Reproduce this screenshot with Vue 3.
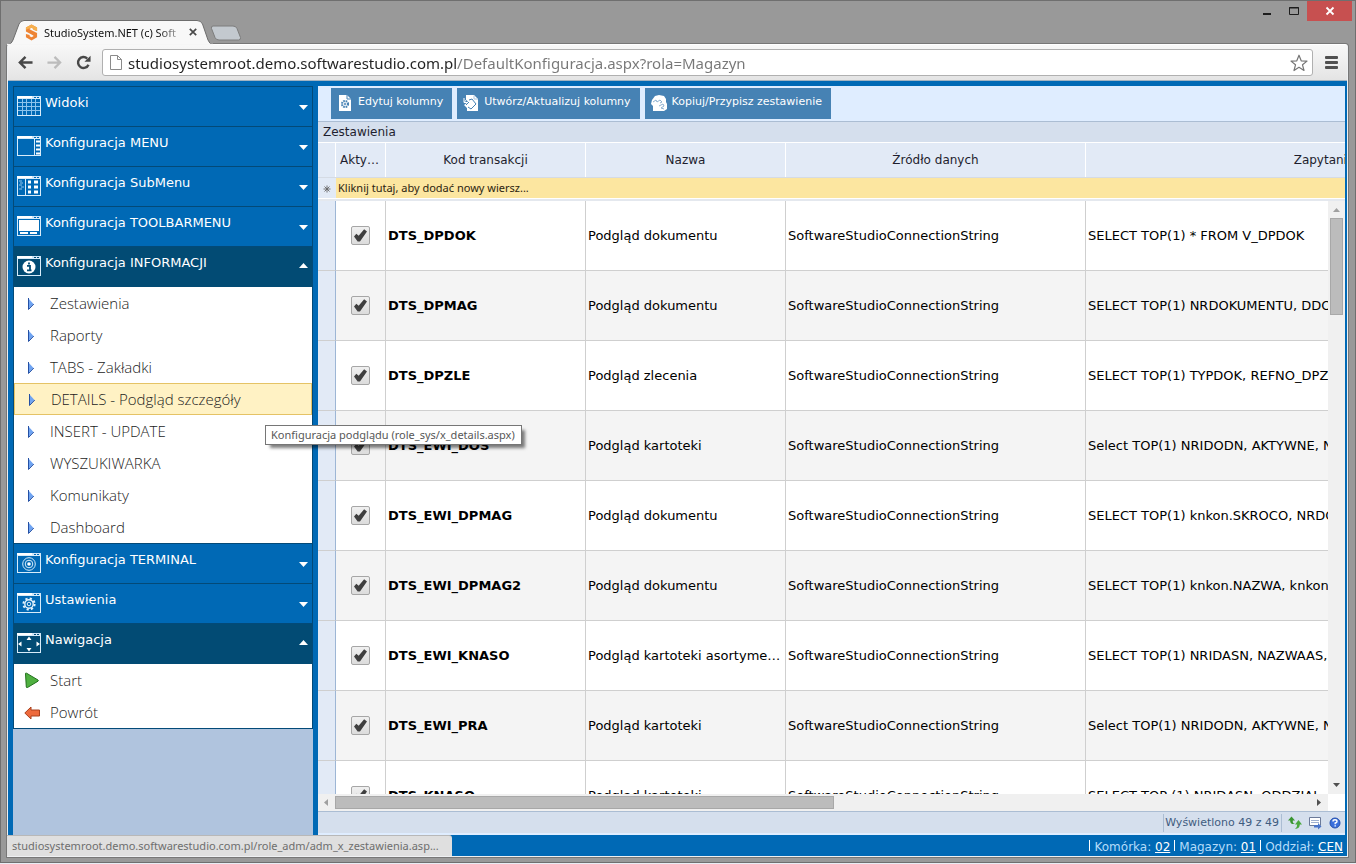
<template>
  <div class="window">
    <header class="titlebar">
      <div class="tab">
        <svg class="tab-shape" viewBox="0 0 206 25" aria-hidden="true">
          <path d="M0 25 Q5 24 6 20 L12 4 Q13.500 0.500 17 0.500 H190 Q194 0.500 195.500 4 L201 20 Q202.500 24 206 25 Z" fill="#f8f8f8" stroke="#6d6d6d" />
          <path d="M0 24.500 H206" stroke="#f6f6f6" stroke-width="1.500" />
        </svg>
        <svg class="favicon" viewBox="0 0 14 18" aria-hidden="true">
          <path d="M13 5.500 V3.500 L7 0.500 L1 3.500 V8 L6.500 11 L9 12.200 V13 L7 14 L5 13 V11.600 L1 10.500 V14.200 L7 17.500 L13 14.200 V9.500 L7.500 6.800 L5 5.600 V5 L7 4 L9 5 V6 L13 7.500 Z" fill="#ee8434" />
          <path d="M13 5.500 V3.500 L7 0.500 L1 3.500 V6 L7 4 L9 5 V6 L13 7.500 Z" fill="#f6b04e" />
        </svg>
        <span class="tab-title">StudioSystem.NET (c) Soft</span>
        <button class="tab-close" aria-label="Zamknij kartę">
          <svg viewBox="0 0 8 8"><path d="M0.800 0.800 L7.200 7.200 M7.200 0.800 L0.800 7.200" stroke="#4a4a4a" stroke-width="1.700" /></svg>
        </button>
      </div>
      <button class="new-tab" aria-label="Nowa karta">
        <svg viewBox="0 0 32 16"><path d="M3 1 H23 Q26 1 27 3.500 L30.500 12.500 Q31 15 28.500 15 H9 Q6 15 5 12.500 L1.500 3.500 Q1 1 3 1 Z" fill="#c3c9cf" stroke="#7c7c7c" /></svg>
      </button>
      <div class="controls">
        <button aria-label="Minimalizuj"><svg viewBox="0 0 10 10"><rect x="1" y="7" width="8" height="2" fill="#1d1d1d" /></svg></button>
        <button aria-label="Maksymalizuj"><svg viewBox="0 0 10 10"><path d="M0.500 1.500 H9.500 V8.500 H0.500 Z M0 2 H10" fill="none" stroke="#1d1d1d" /></svg></button>
        <button class="close" aria-label="Zamknij"><svg viewBox="0 0 10 10"><path d="M1.500 1.500 L8.500 8.500 M8.500 1.500 L1.500 8.500" stroke="#fff" stroke-width="1.800" /></svg></button>
      </div>
    </header>

    <div class="browser">
      <div class="navbar">
        <button class="nav-btn" aria-label="Wstecz">
          <svg viewBox="0 0 16 16"><path d="M15.500 8 H2.500 M8 2 L2 8 L8 14" fill="none" stroke="#484848" stroke-width="2.600" /></svg>
        </button>
        <button class="nav-btn" aria-label="Dalej">
          <svg viewBox="0 0 16 16"><path d="M0.500 8 H13.500 M8 2 L14 8 L8 14" fill="none" stroke="#bcbcbc" stroke-width="2.400" /></svg>
        </button>
        <button class="nav-btn" aria-label="Odśwież">
          <svg viewBox="0 0 16 16"><path d="M13.300 10.300 A5.800 5.800 0 1 1 12 3.800" fill="none" stroke="#484848" stroke-width="2.600" /><path d="M15.500 0.800 V7.200 H9 Z" fill="#484848" /></svg>
        </button>
        <div class="omnibox">
          <svg class="page-icon" viewBox="0 0 12 15" aria-hidden="true"><path d="M0.500 0.500 H7.500 L11.500 4.500 V14.500 H0.500 Z M7.500 0.500 V4.500 H11.500" fill="#fff" stroke="#8b8b8b" /></svg>
          <input v-model="url" class="url" type="text" aria-label="Adres" />
          <svg class="star" viewBox="0 0 18 18" aria-hidden="true"><path d="M9 1.200 L11.200 6.800 L17 7.100 L12.500 10.800 L14 16.500 L9 13.300 L4 16.500 L5.500 10.800 L1 7.100 L6.800 6.800 Z" fill="#fff" stroke="#757575" stroke-width="1.200" stroke-linejoin="round" /></svg>
        </div>
        <button class="menu-btn" aria-label="Menu"><i></i><i></i><i></i></button>
      </div>

      <div class="app">
        <div class="app-main">
          <aside class="sidebar">
            <nav class="panel">
              <section v-for="group in groups" :key="group.label">
                <button class="group" :class="{ open: group.items }">
                  <svg class="group-icon" viewBox="0 0 24 20" aria-hidden="true">
                    <rect x="0" y="0" width="15" height="2" fill="#fff" />
                    <path d="M15 0.500 H24 M15 1.500 H17 M19 1.500 H20 M22 1.500 H24" stroke="#cfe6f8" />
                    <rect x="0.500" y="2.500" width="23" height="17" fill="none" stroke="#d8ecfa" />
                    <template v-if="group.icon === 'grid'">
                      <path d="M1 6.500 H23 M1 10.500 H23 M1 14.500 H23 M5.500 3 V19 M9.500 3 V19 M14.500 3 V19 M18.500 3 V19" stroke="#8cc4ec" />
                    </template>
                    <template v-else-if="group.icon === 'menu'">
                      <path d="M17.500 3 V19" stroke="#d8ecfa" />
                      <path d="M19 5.500 H23 M19 9.500 H23 M19 13.500 H23 M19 17.500 H23" stroke="#fff" stroke-width="2" />
                    </template>
                    <template v-else-if="group.icon === 'submenu'">
                      <path d="M8.500 3 V19" stroke="#d8ecfa" />
                      <path d="M2 5 H5 M3 7 H6 M2 9 H5 M4 11 H7 M2 13 H5" stroke="#8fc4ea" />
                      <path d="M11 6 H14 M17 6 H21 M11 11 H14 M17 11 H21 M11 16 H14 M17 16 H21" stroke="#fff" stroke-width="3" />
                    </template>
                    <template v-else-if="group.icon === 'toolbar'">
                      <rect x="2" y="4" width="20" height="11" fill="#fff" />
                      <path d="M3 17 H11 M13 17 H20" stroke="#fff" stroke-width="2" />
                    </template>
                    <template v-else-if="group.icon === 'info'">
                      <circle cx="12" cy="11" r="6.500" fill="#fff" />
                      <path d="M12 6.500 V8.500 M10 9.800 H13 V14.200 M10 14.300 H14.500" fill="none" stroke="#024b74" stroke-width="1.800" />
                    </template>
                    <template v-else-if="group.icon === 'target'">
                      <g fill="none" stroke="#d8ecfa"><circle cx="12" cy="11" r="6.300" /><circle cx="12" cy="11" r="3.800" /></g>
                      <circle cx="12" cy="11" r="1.800" fill="#fff" />
                    </template>
                    <template v-else-if="group.icon === 'gear'">
                      <circle cx="12" cy="11" r="5.600" fill="none" stroke="#e4f2fc" stroke-width="2" stroke-dasharray="2.200 2.200" />
                      <circle cx="12" cy="11" r="4.200" fill="none" stroke="#e4f2fc" stroke-width="1.400" />
                      <circle cx="12" cy="11" r="1.800" fill="none" stroke="#e4f2fc" />
                    </template>
                    <template v-else>
                      <path d="M12 3.500 L14.500 7 H9.500 Z M12 18.500 L14.500 15 H9.500 Z M1 11 L4.500 8.500 V13.500 Z M23 11 L19.500 8.500 V13.500 Z" fill="#fff" />
                    </template>
                  </svg>
                  <span class="group-label">{{ group.label }}</span>
                  <svg class="group-arrow" viewBox="0 0 9 5" aria-hidden="true">
                    <path :d="group.items ? 'M0 5 L4.500 0 L9 5 Z' : 'M0 0 H9 L4.500 5 Z'" fill="#fff" />
                  </svg>
                </button>
                <ul v-if="group.items" class="items">
                  <li v-for="item in group.items" :key="item.label" class="item" :class="{ hover: item.tip }">
                    <a href="#">
                      <svg class="item-icon" viewBox="0 0 16 16" aria-hidden="true">
                        <path v-if="item.icon === 'start'" d="M1.500 1.500 Q1.500 0.800 2.500 1.200 L14 8 Q14.800 8.500 14 9.200 L3.500 15.500 Q2.500 16 2.300 15 Z" fill="#4fb040" stroke="#22701c" stroke-linejoin="round" />
                        <path v-else-if="item.icon === 'back'" d="M0.800 9 L7 3 V6 H15.500 V12 H7 V15 Z" fill="#ee6a3c" stroke="#a9401d" stroke-linejoin="round" />
                        <g v-else>
                          <path d="M4.500 3.500 L9.500 9 L4.500 14 Z" fill="#6fa4f2" />
                          <path d="M4.500 3 V14.500 L9.800 9" fill="none" stroke="#2450a4" />
                        </g>
                      </svg>
                      {{ item.label }}
                    </a>
                    <span v-if="item.tip" class="tooltip" role="tooltip">{{ item.tip }}</span>
                  </li>
                </ul>
              </section>
            </nav>
          </aside>

          <main class="content">
            <div class="toolbar">
              <button v-for="action in actions" :key="action.label" class="tool">
                <svg viewBox="0 0 16 16" aria-hidden="true">
                  <template v-if="action.icon === 'edit'">
                    <path d="M2 0 H10 L14 4 V16 H2 Z" fill="#fff" />
                    <path d="M10 0 V4 H14" fill="none" stroke="#4682b4" />
                    <circle cx="8" cy="9" r="3" fill="none" stroke="#4682b4" stroke-width="2.200" stroke-dasharray="1.600 0.800" />
                    <circle cx="8" cy="9" r="1" fill="#4682b4" />
                  </template>
                  <template v-else-if="action.icon === 'update'">
                    <path d="M3 0 H11 L15 4 V16 H4 V13 L1 10 L5 7 L3 4 Z" fill="#fff" />
                    <path d="M11 0.500 V4 H15" fill="none" stroke="#a9c6df" />
                    <path d="M6 5 L9 4 L13 9 L8 14 L5 12 M3 10 L6 7" fill="none" stroke="#4682b4" />
                    <path d="M1 3 V7.500 H5 M1.500 7 L4 4" fill="none" stroke="#fff" />
                  </template>
                  <template v-else>
                    <path d="M1 5 L4 1 L8 0 L13 1 L15 4 V7 L16 9 V14 L13 16 H2 V11 L0 9 Z" fill="#fff" />
                    <path d="M2 7 L5 5 L6 7 L9 5 L11 7 L9 8 M8 11 L12 9 L13 11 L10 13 L13 14" fill="none" stroke="#8fb2d1" />
                  </template>
                </svg>
                {{ action.label }}
              </button>
            </div>
            <h1 class="caption">Zestawienia</h1>
            <div class="grid-head">
              <table class="grid">
                <colgroup><col v-for="(w, i) in widths" :key="i" :class="w" /></colgroup>
                <thead>
                  <tr>
                    <th></th>
                    <th v-for="column in columns" :key="column">{{ column }}</th>
                  </tr>
                </thead>
              </table>
              <div class="new-row">
                <span class="new-mark">
                  <svg viewBox="0 0 8 8" aria-hidden="true"><path d="M4 0.500 V7.500 M0.500 4 H7.500 M1.500 1.500 L6.500 6.500 M6.500 1.500 L1.500 6.500" stroke="#666" stroke-width="0.900" /></svg>
                </span>
                <button class="new-text">Kliknij tutaj, aby dodać nowy wiersz...</button>
              </div>
            </div>
            <div class="grid-area">
              <div class="grid-body">
                <table class="grid">
                  <colgroup><col v-for="(w, i) in widths" :key="i" :class="w" /></colgroup>
                  <tbody>
                    <tr v-for="row in rows" :key="row.code">
                      <td class="mark"></td>
                      <td class="check"><input v-model="row.active" type="checkbox" :aria-label="row.code" /></td>
                      <td class="code">{{ row.code }}</td>
                      <td>{{ row.name }}</td>
                      <td>SoftwareStudioConnectionString</td>
                      <td>{{ row.query }}</td>
                    </tr>
                  </tbody>
                </table>
              </div>
              <div class="vscroll">
                <svg viewBox="0 0 17 16"><path d="M5 11 L8.500 7 L12 11 Z" fill="#a0a0a0" /></svg>
                <div class="vthumb"></div>
                <svg viewBox="0 0 17 16"><path d="M5 5 L8.500 9 L12 5 Z" fill="#505050" /></svg>
              </div>
            </div>
            <div class="hscroll">
              <svg viewBox="0 0 17 17"><path d="M10 5 L6 8.500 L10 12 Z" fill="#a0a0a0" /></svg>
              <div class="hthumb"></div>
              <svg viewBox="0 0 17 17"><path d="M6 5 L10 8.500 L6 12 Z" fill="#505050" /></svg>
              <span class="corner"></span>
            </div>
            <div class="grid-foot">
              <span class="count">Wyświetlono 49 z 49</span>
              <button aria-label="Odśwież"><svg viewBox="0 0 14 14"><path d="M3.500 0.500 L7 4.500 H4.800 V6 Q5 7.500 7 8 Q2.500 8.500 2.200 5.500 V4.500 H0 Z" fill="#3a9530" /><path d="M10.500 4 L14 8.500 H11.800 Q11.800 12.500 7 13 Q9.200 12 9.200 8.500 H7 Z" fill="#4aa83c" /></svg></button>
              <button aria-label="Eksport"><svg viewBox="0 0 14 14"><path d="M1.500 1.500 H12.500 V9.500 H1.500 Z" fill="#fff" stroke="#6c7a99" /><path d="M3 4.500 H11 M3 6.500 H11" stroke="#9fb0d0" /><path d="M6 9 H10 V7 L13.500 10.500 L10 13.500 V11.500 H6 Z" fill="#4a74c9" /></svg></button>
              <button aria-label="Pomoc"><svg viewBox="0 0 14 14"><circle cx="7" cy="7" r="5" fill="#3a6fdc" stroke="#2550ad" /><path d="M5 5.500 Q5 3.800 7 3.800 Q9 3.800 9 5.400 Q9 6.500 7.200 7 V8.300 M7.200 9.300 V10.600" fill="none" stroke="#fff" stroke-width="1.400" /></svg></button>
            </div>
          </main>
        </div>

        <footer class="statusbar">
          <span v-for="s in status" :key="s.label" class="status">{{ s.label }}: <a href="#">{{ s.value }}</a></span>
        </footer>
        <div class="link-preview">studiosystemroot.demo.softwarestudio.com.pl/role_adm/adm_x_zestawienia.asp...</div>
      </div>
    </div>
  </div>
</template>

<script setup>
import { ref } from 'vue'

const url = ref('studiosystemroot.demo.softwarestudio.com.pl/DefaultKonfiguracja.aspx?rola=Magazyn')

const groups = [
  { label: 'Widoki', icon: 'grid' },
  { label: 'Konfiguracja MENU', icon: 'menu' },
  { label: 'Konfiguracja SubMenu', icon: 'submenu' },
  { label: 'Konfiguracja TOOLBARMENU', icon: 'toolbar' },
  {
    label: 'Konfiguracja INFORMACJI',
    icon: 'info',
    items: [
      { label: 'Zestawienia' },
      { label: 'Raporty' },
      { label: 'TABS - Zakładki' },
      { label: 'DETAILS - Podgląd szczegóły', tip: 'Konfiguracja podglądu (role_sys/x_details.aspx)' },
      { label: 'INSERT - UPDATE' },
      { label: 'WYSZUKIWARKA' },
      { label: 'Komunikaty' },
      { label: 'Dashboard' }
    ]
  },
  { label: 'Konfiguracja TERMINAL', icon: 'target' },
  { label: 'Ustawienia', icon: 'gear' },
  {
    label: 'Nawigacja',
    icon: 'move',
    items: [
      { label: 'Start', icon: 'start' },
      { label: 'Powrót', icon: 'back' }
    ]
  }
]

const actions = [
  { label: 'Edytuj kolumny', icon: 'edit' },
  { label: 'Utwórz/Aktualizuj kolumny', icon: 'update' },
  { label: 'Kopiuj/Przypisz zestawienie', icon: 'copy' }
]

const columns = ['Aktywne', 'Kod transakcji', 'Nazwa', 'Źródło danych', 'Zapytanie']
const widths = ['w-mark', 'w-check', 'w-code', 'w-name', 'w-source', 'w-query']

const rows = ref([
  { active: true, code: 'DTS_DPDOK', name: 'Podgląd dokumentu', query: 'SELECT TOP(1) * FROM V_DPDOK' },
  { active: true, code: 'DTS_DPMAG', name: 'Podgląd dokumentu', query: 'SELECT TOP(1) NRDOKUMENTU, DDOW' },
  { active: true, code: 'DTS_DPZLE', name: 'Podgląd zlecenia', query: 'SELECT TOP(1) TYPDOK, REFNO_DPZLE' },
  { active: true, code: 'DTS_EWI_DOS', name: 'Podgląd kartoteki', query: 'Select TOP(1) NRIDODN, AKTYWNE, NA' },
  { active: true, code: 'DTS_EWI_DPMAG', name: 'Podgląd dokumentu', query: 'SELECT TOP(1) knkon.SKROCO, NRDOK' },
  { active: true, code: 'DTS_EWI_DPMAG2', name: 'Podgląd dokumentu', query: 'SELECT TOP(1) knkon.NAZWA, knkon.I' },
  { active: true, code: 'DTS_EWI_KNASO', name: 'Podgląd kartoteki asortymentowej', query: 'SELECT TOP(1) NRIDASN, NAZWAAS, IN' },
  { active: true, code: 'DTS_EWI_PRA', name: 'Podgląd kartoteki', query: 'Select TOP(1) NRIDODN, AKTYWNE, NA' },
  { active: true, code: 'DTS_KNASO', name: 'Podgląd kartoteki', query: 'SELECT TOP (1) NRIDASN, ODDZIAL, N' }
])

const status = [
  { label: 'Komórka', value: '02' },
  { label: 'Magazyn', value: '01' },
  { label: 'Oddział', value: 'CEN' }
]
</script>

<style>
body {
  margin: 0;
  background: #e8edf4;
}
</style>

<style scoped>
* {
  box-sizing: border-box;
}
.window {
  display: flex;
  flex-direction: column;
  height: calc(100vh - 1px);
  padding: 0 7px 5px 6px;
  border: 1px solid #6f6f6f;
  background: #999;
  font-family: 'DejaVu Sans', sans-serif;
  font-size: 13px;
  overflow: hidden;
}
button {
  padding: 0;
  border: none;
  background: none;
  font: inherit;
  cursor: pointer;
}
svg {
  display: block;
  flex: none;
}

/* title bar */
.titlebar {
  display: flex;
  align-items: flex-end;
  height: 43px;
  flex: none;
}
.tab {
  position: relative;
  display: flex;
  align-items: center;
  width: 206px;
  height: 24px;
  padding-left: 18px;
}
.tab-shape {
  position: absolute;
  left: 0;
  top: 0;
  width: 206px;
  height: 25px;
}
.favicon {
  position: relative;
  width: 13px;
  height: 17px;
}
.tab-title {
  position: relative;
  width: 138px;
  margin-left: 6px;
  font-family: 'Noto Sans', sans-serif;
  font-size: 11px;
  white-space: nowrap;
  overflow: hidden;
  background: linear-gradient(90deg, #111 114px, transparent 144px);
  background-clip: text;
  color: transparent;
}
.tab-close {
  position: relative;
  margin-left: 7px;
}
.tab-close svg {
  width: 8px;
  height: 8px;
}
.new-tab {
  margin: 0 0 3px -3px;
}
.new-tab svg {
  width: 32px;
  height: 16px;
}
.controls {
  display: flex;
  align-self: flex-start;
  margin-left: auto;
}
.controls button {
  display: flex;
  align-items: center;
  justify-content: center;
  width: 27px;
  height: 20px;
}
.controls svg {
  width: 10px;
  height: 10px;
}
.controls .close {
  width: 45px;
  margin-right: -4px;
  background: #c75050;
}

/* browser chrome */
.browser {
  display: flex;
  flex-direction: column;
  flex: 1;
  min-height: 0;
  border: 1px solid #eef0f2;
  border-top-color: #fff;
  border-radius: 3px 3px 0 0;
  box-shadow: 0 0 0 1px #777;
  background: #f4f4f4;
}
.navbar {
  display: flex;
  align-items: center;
  gap: 14px;
  height: 36px;
  flex: none;
  padding: 0 9px 0 10px;
  border-bottom: 1px solid #a3b4c2;
  background: linear-gradient(#f8f8f8, #e4e4e4);
}
.nav-btn svg {
  width: 15px;
  height: 15px;
}
.omnibox {
  display: flex;
  align-items: center;
  flex: 1;
  height: 27px;
  margin: 0 -2px 0 -3px;
  padding: 0 4px 0 7px;
  border: 1px solid #b0b0b0;
  border-radius: 3px;
  background: #fff;
}
.page-icon {
  width: 12px;
  height: 15px;
}
.url {
  flex: 1;
  min-width: 0;
  margin: 0 6px;
  padding: 0;
  border: none;
  outline: none;
  font-family: 'Noto Sans', sans-serif;
  font-size: 15px;
  background: linear-gradient(90deg, #222 329px, #777 329px);
  background-clip: text;
  color: transparent;
}
.star {
  width: 18px;
  height: 18px;
}
.menu-btn {
  display: flex;
  flex-direction: column;
  gap: 2px;
}
.menu-btn i {
  width: 13px;
  height: 3px;
  border-radius: 1px;
  background: #505050;
}

/* application */
.app {
  position: relative;
  display: flex;
  flex-direction: column;
  flex: 1;
  min-height: 0;
  background: #0069b5;
}
.app-main {
  display: flex;
  flex: 1;
  min-height: 0;
  gap: 5px;
  padding: 5px 2px 0 5px;
}
.sidebar {
  width: 300px;
  flex: none;
  background: #b0c4de;
}
.panel {
  border: 1px solid #034a78;
  border-top: none;
}
.group {
  display: flex;
  align-items: flex-start;
  width: 100%;
  height: 40px;
  padding: 7px 4px 0 3px;
  border-top: 1px solid #034a78;
  background: #0069b5;
  color: #fff;
  text-align: left;
}
.group.open {
  height: 41px;
  background: #024b74;
}
.group-icon {
  width: 24px;
  height: 20px;
  margin-top: 2px;
}
.group-label {
  flex: 1;
  margin-left: 4px;
  line-height: 18px;
}
.group-arrow {
  width: 9px;
  height: 5px;
  margin-top: 11px;
}
.open .group-arrow {
  margin-top: 9px;
}
.items {
  margin: 0;
  padding: 0;
  list-style: none;
  background: #fff;
}
.item {
  position: relative;
}
.item a {
  display: flex;
  align-items: center;
  gap: 10px;
  height: 32px;
  padding: 0 10px;
  color: #1c1c1c;
  font-family: 'Open Sans', sans-serif;
  font-size: 15px;
  font-weight: 300;
  text-decoration: none;
}
.item-icon {
  width: 16px;
  height: 16px;
}
.item.hover a {
  border: 1px solid #e5c365;
  background: #fff2c4;
}
.tooltip {
  position: absolute;
  left: 251px;
  top: 42px;
  z-index: 2;
  padding: 0 6px 0 5px;
  border: 1px solid #767676;
  background: #fff;
  box-shadow: 4px 4px 3px -1px rgba(0, 0, 0, 0.5);
  color: #575757;
  font-family: 'Noto Sans', sans-serif;
  font-size: 11px;
  line-height: 18px;
  white-space: nowrap;
}

/* grid */
.content {
  display: flex;
  flex-direction: column;
  flex: 1;
  min-width: 0;
  background: #fff;
}
.toolbar {
  display: flex;
  gap: 5px;
  height: 36px;
  flex: none;
  padding: 2px 13px;
  border-bottom: 1px solid #abbdd3;
  background: #dfedff;
}
.tool {
  display: flex;
  align-items: center;
  gap: 5px;
  height: 31px;
  padding: 0 9px 4px 6px;
  background: #4682b4;
  color: #fff;
  font-size: 11px;
  white-space: nowrap;
}
.tool svg {
  width: 16px;
  height: 16px;
  margin-top: 3px;
}
.caption {
  flex: none;
  margin: 0;
  padding: 0 5px;
  background: #d5dfed;
  font-size: 12px;
  font-weight: 400;
  line-height: 20px;
  color: #1e1e2e;
}
.grid-head {
  flex: none;
  overflow: hidden;
  border-bottom: 2px solid #e4e8ee;
  background: #e2eaf6;
}
.grid {
  width: 1245px;
  table-layout: fixed;
  border-collapse: separate;
  border-spacing: 0;
}
.w-mark {
  width: 18px;
}
.w-check {
  width: 50px;
}
.w-code,
.w-name {
  width: 200px;
}
.w-source {
  width: 300px;
}
th {
  height: 35px;
  padding: 0 4px;
  border-top: 1px solid #fff;
  border-right: 1px solid #fff;
  color: #1e1e2e;
  font-size: 12px;
  font-weight: 400;
  overflow: hidden;
  text-overflow: ellipsis;
  white-space: nowrap;
}
.new-row {
  display: flex;
  height: 22px;
  border-top: 1px solid #d5dbe4;
  border-bottom: 1px solid #fff;
}
.new-mark {
  display: flex;
  align-items: center;
  justify-content: center;
  width: 18px;
  padding-top: 2px;
}
.new-mark svg {
  width: 8px;
  height: 8px;
}
.new-text {
  flex: 1;
  padding-left: 2px;
  background: #fce6a0;
  color: #2c2410;
  font-family: 'Noto Sans', sans-serif;
  font-size: 11px;
  line-height: 18px;
  text-align: left;
}
.grid-area {
  display: flex;
  flex: 1;
  min-height: 0;
}
.grid-body {
  flex: 1;
  min-width: 0;
  overflow: hidden;
}
td {
  height: 70px;
  padding: 0 2px;
  border-right: 1px solid #cfcfcf;
  border-bottom: 1px solid #cfcfcf;
  overflow: hidden;
  text-overflow: ellipsis;
  white-space: nowrap;
}
tr:nth-child(even) td {
  background: #f4f4f4;
}
.grid tr .mark {
  border-right-color: #9db6d5;
  background: #e2eaf6;
}
.check {
  text-align: center;
}
.code {
  font-weight: 700;
}
.check input {
  appearance: none;
  display: block;
  width: 19px;
  height: 19px;
  margin: 0 auto;
  border: 1px solid #a6a6a6;
  border-radius: 2px;
  background: linear-gradient(#f0f0f0, #dcdcdc);
}
.check input:checked::before {
  content: '';
  display: block;
  width: 13px;
  height: 13px;
  margin: 2px;
  background: #3f3f3f;
  clip-path: polygon(0 58%, 18% 36%, 36% 52%, 78% 2%, 100% 20%, 46% 96%, 28% 96%);
}
.vscroll {
  display: flex;
  flex-direction: column;
  width: 17px;
  background: #f0f0f0;
}
.vscroll svg {
  width: 17px;
  height: 16px;
}
.vthumb {
  width: 13px;
  height: 97px;
  margin: 1px 2px auto;
  border: 1px solid #a8a8a8;
  background: #bcbcbc;
}
.hscroll {
  display: flex;
  align-items: center;
  height: 17px;
  flex: none;
  background: #f0f0f0;
}
.hscroll svg {
  width: 17px;
  height: 17px;
}
.hthumb {
  width: 499px;
  height: 13px;
  margin-right: auto;
  border: 1px solid #a8a8a8;
  background: #bcbcbc;
}
.corner {
  width: 17px;
  height: 17px;
  background: #fff;
}
.grid-foot {
  display: flex;
  align-items: center;
  justify-content: flex-end;
  gap: 6px;
  height: 24px;
  flex: none;
  padding: 0 3px;
  border-top: 1px solid #abbdd3;
  border-bottom: 2px solid #dfedff;
  background: #d5dfed;
}
.count {
  padding: 0 2px 0 1px;
  border-left: 1px solid #abbdd3;
  border-right: 1px solid #abbdd3;
  color: #3f5c80;
  font-size: 11px;
  line-height: 18px;
}
.grid-foot svg {
  width: 14px;
  height: 14px;
}
.statusbar {
  display: flex;
  align-items: center;
  justify-content: flex-end;
  gap: 4px;
  height: 21px;
  flex: none;
  padding: 2px 4px 0 0;
  color: #b5dcfa;
  font-size: 12px;
}
.status {
  line-height: 12px;
}
.status::before {
  content: '';
  display: inline-block;
  width: 1px;
  height: 11px;
  margin-right: 4px;
  background: #fff;
}
.status a {
  color: #fff;
}
.link-preview {
  position: absolute;
  left: -1px;
  bottom: 0;
  width: 445px;
  padding: 0 5px;
  border-top: 1px solid #b8b8b8;
  border-radius: 0 3px 0 0;
  background: #dfdfdf;
  color: #6e6e6e;
  font-family: 'Noto Sans', sans-serif;
  font-size: 11px;
  line-height: 20px;
  white-space: nowrap;
}
</style>
